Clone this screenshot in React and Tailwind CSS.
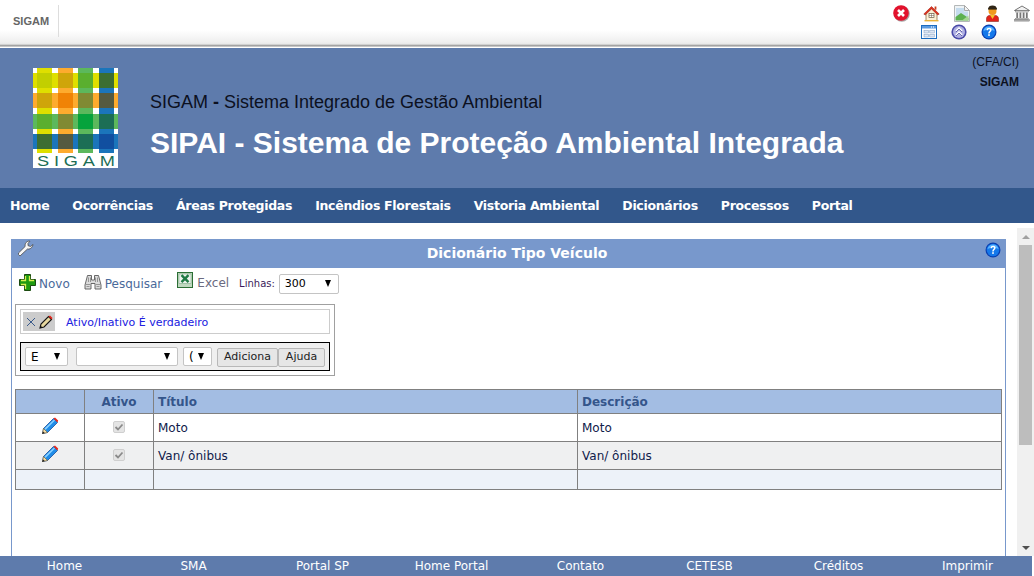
const V = '"DejaVu Sans", Verdana, sans-serif';
const A = '"Liberation Sans", Arial, sans-serif';

function HelpIcon({ s = 16 }) {
  return (
    <svg width={s} height={s} viewBox="0 0 16 16">
      <circle cx="8" cy="8" r="7.5" fill="#0a3fb0" />
      <circle cx="8" cy="8" r="6.3" fill="#1478ea" />
      <path d="M2.5 7A5.6 5.6 0 0 1 13.5 7 Q8 4 2.5 7Z" fill="#58b2ff" />
      <path d="M5.6 6.2C5.6 4.6 6.7 3.8 8.1 3.8 9.6 3.8 10.6 4.7 10.6 5.9 10.6 7.6 8.7 7.6 8.7 9.4H7.2C7.2 7.2 8.9 7 8.9 5.9 8.9 5.4 8.6 5.1 8 5.1 7.4 5.1 7.2 5.6 7.2 6.2Z" fill="#fff" />
      <rect x="7.2" y="10.2" width="1.6" height="1.7" fill="#fff" />
    </svg>
  );
}
function CloseIcon() {
  return (
    <svg width="17" height="17" viewBox="0 0 17 17">
      <circle cx="8.8" cy="8.8" r="8" fill="#a8a8a8" />
      <circle cx="8" cy="8" r="7.8" fill="#e2122d" />
      <path d="M5 5 11 11M11 5 5 11" stroke="#fff" strokeWidth="2.6" />
    </svg>
  );
}
function HomeIcon() {
  return (
    <svg width="17" height="17" viewBox="0 0 17 17">
      <path d="M3 8V15.5H14V8L8.5 3Z" fill="#fbf0d6" stroke="#7a5a30" strokeWidth=".7" />
      <path d="M.8 9 8.5 1.5 16.2 9 14.8 10 8.5 4 2.2 10Z" fill="#e2301c" stroke="#8c1a10" strokeWidth=".5" />
      <rect x="11.6" y="1.5" width="1.8" height="3.2" fill="#c9401f" />
      <rect x="6" y="8.5" width="5" height="4" fill="#fff" stroke="#6a5a40" strokeWidth=".7" />
      <path d="M8.5 8.5V12.5M6 10.5H11" stroke="#6a5a40" strokeWidth=".5" />
      <rect x="1.5" y="15" width="14" height="1.4" fill="#e8b23a" />
    </svg>
  );
}
function BrokenImage() {
  return (
    <svg width="16" height="17" viewBox="0 0 16 17">
      <path d="M.5.5H10.5L15.5 5.5V16.5H.5Z" fill="#eef3f6" stroke="#b4b8b8" />
      <path d="M10.5 .5V5.5H15.5Z" fill="#f4f4f4" stroke="#a8a8a8" />
      <path d="M2 3H10V6.5H14V12H2Z" fill="#c5dcee" />
      <path d="M1.5 15.5V12L7 8 14.5 13V15.5Z" fill="#5bb04f" />
      <path d="M8 15.5 14.5 10.5V15.5Z" fill="#a5d693" />
    </svg>
  );
}
function PersonIcon() {
  return (
    <svg width="15" height="17" viewBox="0 0 15 17">
      <path d="M1.5 16.5V13.5C1.5 11 4 10 7.5 10 11 10 13.5 11 13.5 13.5V16.5Z" fill="#e2231a" stroke="#7a1a10" strokeWidth=".5" />
      <circle cx="7.5" cy="6" r="4" fill="#f09a1e" />
      <path d="M3.2 4.4C3.2 1.5 5 .5 7.5.5 10 .5 11.8 1.5 11.8 4.4L10.5 3.6H4.5Z" fill="#2f2516" />
      <rect x="3.2" y="3" width="8.6" height="1.6" fill="#2f2516" />
      <path d="M5 10H10L7.5 14Z" fill="#f6c22a" />
    </svg>
  );
}
function BankIcon() {
  return (
    <svg width="16" height="17" viewBox="0 0 16 17">
      <path d="M8 1 15.5 5.5H.5Z" fill="#f2f2f2" stroke="#555" strokeWidth=".8" />
      <rect x="1.5" y="5.6" width="13" height="1.4" fill="#dcdcdc" stroke="#666" strokeWidth=".4" />
      <path d="M3.2 7.5V13M6.4 7.5V13M9.6 7.5V13M12.8 7.5V13" stroke="#777" strokeWidth="1.8" />
      <rect x="1.5" y="13.2" width="13" height="1.2" fill="#ccc" stroke="#555" strokeWidth=".3" />
      <rect x=".5" y="14.6" width="15" height="1.5" fill="#aaa" stroke="#444" strokeWidth=".3" />
    </svg>
  );
}
function WindowIcon() {
  return (
    <svg width="16" height="14" viewBox="0 0 16 14">
      <rect x=".5" y=".5" width="15" height="13" fill="#fff" stroke="#1d6cc0" />
      <rect x="1" y="1" width="14" height="2.5" fill="#5a9ae0" />
      <path d="M10 2H11M12 2H13" stroke="#fff" />
      <rect x="3" y="5.5" width="4.5" height="2.5" fill="#dde6f4" stroke="#7f9bc2" strokeWidth=".5" />
      <rect x="8.8" y="5.5" width="4.5" height="2.5" fill="#dde6f4" stroke="#7f9bc2" strokeWidth=".5" />
      <rect x="3" y="9.5" width="4.5" height="2.5" fill="#dde6f4" stroke="#7f9bc2" strokeWidth=".5" />
      <rect x="8.8" y="9.5" width="4.5" height="2.5" fill="#dde6f4" stroke="#7f9bc2" strokeWidth=".5" />
    </svg>
  );
}
function UpIcon() {
  return (
    <svg width="16" height="16" viewBox="0 0 16 16">
      <circle cx="8" cy="8" r="7.6" fill="#4a4aa8" />
      <circle cx="8" cy="8" r="6" fill="#b0b0e2" />
      <path d="M5 7.2 8 4.2 11 7.2M5 11.2 8 8.2 11 11.2" fill="none" stroke="#fff" strokeWidth="1.8" />
      <path d="M5 8 8 5 11 8M5 12 8 9 11 12" fill="none" stroke="#33338c" strokeWidth=".7" />
    </svg>
  );
}
function Wrench() {
  return (
    <svg width="17" height="17" viewBox="0 0 17 17">
      <path d="M1.5 14.5 3 16 10.5 9C12.5 9.5 15.5 8 16 4.5L13.5 6.5 11 5.6 11 3.4 13 1.2C10 .6 7.5 3.2 8.2 6.4L1.5 13Z" fill="#f6f6f6" stroke="#4a4a4a" strokeWidth=".8" />
    </svg>
  );
}
function Plus() {
  return (
    <svg width="17" height="17" viewBox="0 0 17 17">
      <path d="M5.5 .5H11.5V5.5H16.5V11.5H11.5V16.5H5.5V11.5H.5V5.5H5.5Z" fill="#1f9a10" stroke="#1b4a10" />
      <path d="M6.5 15V10.5H2M6.5 2V6.5H2M10.5 2V6.5H15" fill="none" stroke="#d8f050" strokeWidth="1.3" />
    </svg>
  );
}
function Binoculars() {
  return (
    <svg width="18" height="17" viewBox="0 0 18 17">
      <path d="M3.5 1.5H7.5V6H10.5V1.5H14.5L17 11V15H11V9.5H7V15H1V11Z" fill="#dcdcdc" stroke="#5a5a5a" strokeWidth=".9" />
      <path d="M2 10.5H6M12 10.5H16M4.5 3.5V8M6.5 3.5V8M11.5 3.5V8M13.5 3.5V8M2.5 12.5H5.5M12.5 12.5H15.5" stroke="#777" strokeWidth=".7" />
    </svg>
  );
}
function ExcelIcon() {
  return (
    <svg width="16" height="16" viewBox="0 0 16 16">
      <rect x=".5" y=".5" width="15" height="15" fill="#bfd8bf" stroke="#2b6e35" />
      <rect x="2" y="2" width="12" height="9.5" fill="#eef4ee" stroke="#6b9c76" strokeWidth=".5" />
      <path d="M4.5 3.2 11.5 10.2M11.5 3.2 4.5 10.2" stroke="#1f7a44" strokeWidth="2.4" />
    </svg>
  );
}
function Pencil({ s = 18 }) {
  return (
    <svg width={s} height={s} viewBox="0 0 18 18">
      <path d="M1.5 16.5 2.5 11.5 12.5 1.5 16.5 5.5 6.5 15.5Z" fill="#1f8ce8" stroke="#0b3f8f" strokeWidth=".7" />
      <path d="M3.5 11.5 13 2.5 14 3.5 4.5 13Z" fill="#8ad0ff" />
      <path d="M12.5 1.5 14 .6 17.2 3.6 16.5 5.5Z" fill="#e8291c" />
      <path d="M1.5 16.5 2.5 11.5 6.5 15.5Z" fill="#f7dfa8" stroke="#6b4a10" strokeWidth=".5" />
      <path d="M1.2 17 2 14.5 3.8 16Z" fill="#222" />
    </svg>
  );
}
function MiniPencil() {
  return (
    <svg width="14" height="14" viewBox="0 0 14 14">
      <path d="M1 13 2 9 9.5 1.5 12.5 4.5 5 12Z" fill="#e8d9a0" stroke="#111" strokeWidth="1.1" />
      <path d="M9.5 1.5 11 .5 13.5 3 12.5 4.5Z" fill="#e2231a" />
      <path d="M1 13 1.6 10.6 3.4 12.4Z" fill="#111" />
    </svg>
  );
}
function Logo() {
  const xs = [4, 25, 45, 66];
  const ys = [5, 25, 46, 66];
  const cells = [
    ['#c2cf00', '#cfa50a', '#5aaf2f', '#3c6e32'],
    ['#cfa50a', '#f08305', '#808a33', '#555a40'],
    ['#5aaf2f', '#808a33', '#06a33c', '#1c6e55'],
    ['#3c6e32', '#555a40', '#1c6e55', '#114fa0'],
  ];
  const v = ['#dfdf00', '#fdab2e', '#5cb85c', '#1b75bb'];
  return (
    <svg width="85" height="100" viewBox="0 0 85 100" className="shrink-0">
      <rect width="85" height="100" fill="#fff" />
      {v.map((c, i) => <rect key={i} x={xs[i]} y="0" width="15" height="85" fill={c} />)}
      {v.map((c, i) => <rect key={i} x="0" y={ys[i]} width="85" height="15" fill={c} />)}
      {cells.map((r, j) => r.map((c, i) => <rect key={i + '-' + j} x={xs[i]} y={ys[j]} width="15" height="15" fill={c} />))}
      <rect x="0" y="81" width="85" height="19" fill="#fff" />
      {v.map((c, i) => <rect key={i} x={xs[i]} y="81" width="15" height="4" fill={c} />)}
      <text transform="translate(4 98) scale(1.3 1)" fill="#1c6e55" fontSize="14" fontFamily={A} textLength="60" lengthAdjust="spacing">SIGAM</text>
    </svg>
  );
}
function Sel({ w, children, cls = 'h-[19px] text-[12px]', tc = '' }) {
  return (
    <div className={`flex items-center justify-between bg-white border border-[#c4c4c4] rounded-[2px] pl-[5px] pr-[7px] text-black ${cls}`} style={{ width: w }}>
      <span className={tc}>{children}</span>
      <span className="w-0 h-0 border-x-[3.5px] border-x-transparent border-t-[7px] border-t-black" />
    </div>
  );
}
const Cb = () => (
  <span className="w-[12px] h-[12px] rounded-[2px] bg-[#e4e4e4] border border-[#cfcfcf] flex items-center justify-center">
    <svg width="10" height="10" viewBox="0 0 10 10"><path d="M1.5 5 4 7.5 8.5 2.5" fill="none" stroke="#8a8a8a" strokeWidth="1.8" /></svg>
  </span>
);

function Row({ h, bg, a, b, data }) {
  return (
    <div className={`grid grid-cols-[69px_69px_424px_1fr] border-b border-[#808080] ${bg}`} style={{ height: h }}>
      <div className="border-r border-[#808080] flex justify-center pt-[3px]">{data && <Pencil />}</div>
      <div className="border-r border-[#808080] flex justify-center pt-[7px]">{data && <Cb />}</div>
      <div className="border-r border-[#808080] pl-[4px] pt-[5px] text-[12px] text-[#10204a]">{a}</div>
      <div className="pl-[4px] pt-[5px] text-[12px] text-[#10204a]">{b}</div>
    </div>
  );
}

export default function App() {
  const nav = ['Home', 'Ocorrências', 'Áreas Protegidas', 'Incêndios Florestais', 'Vistoria Ambiental', 'Dicionários', 'Processos', 'Portal'];
  const foot = ['Home', 'SMA', 'Portal SP', 'Home Portal', 'Contato', 'CETESB', 'Créditos', 'Imprimir'];
  return (
    <div className="w-[1034px] h-[576px] overflow-hidden flex flex-col bg-white" style={{ fontFamily: V }}>
      <div className="h-[48px] shrink-0 flex justify-between bg-[linear-gradient(#ffffff_0,#ffffff_30px,#efefef_42px,#e8e8e8_44px,#8c8c8c_46px,#ffffff_47px)]">
        <div className="flex h-[32px] mt-[5px] items-center pl-[13px] pr-[9px] border-r border-[#dddddd] text-[11px] font-bold text-[#666666]" style={{ fontFamily: A }}>SIGAM</div>
        <div className="w-[141px] pt-[5px] pr-[3px]">
          <div className="flex items-start h-[19px] gap-[14px]">
            <CloseIcon />
            <span className="-ml-px"><HomeIcon /></span>
            <BrokenImage />
            <span className="ml-px"><PersonIcon /></span>
            <BankIcon />
          </div>
          <div className="flex items-center gap-[14px] pl-[28px] h-[16px]">
            <WindowIcon /><UpIcon /><HelpIcon />
          </div>
        </div>
      </div>

      <div className="h-[140px] shrink-0 bg-[#5e7bac] flex pl-[33px] pt-[20px] relative" style={{ fontFamily: A }}>
        <Logo />
        <div className="ml-[32px] pt-[23px]">
          <div className="text-[18px] leading-[22px] text-[#0c1020]">SIGAM <b className="font-bold">-</b> Sistema Integrado de Gestão Ambiental</div>
          <div className="text-[30px] leading-[36px] mt-[12px] font-bold text-white">SIPAI - Sistema de Proteção Ambiental Integrada</div>
        </div>
        <div className="absolute right-[15px] top-[4px] text-right text-[12px] leading-[20px] text-[#0c1020]">
          <div>(CFA/CI)</div>
          <div className="font-bold">SIGAM</div>
        </div>
      </div>

      <div className="h-[35px] shrink-0 bg-[#32578b] flex items-center pl-[10px] pt-[1px] gap-[23px] text-[12.5px] font-bold text-white tracking-[-0.3px]">
        {nav.map(n => <span key={n}>{n}</span>)}
      </div>

      <div className="flex-1 min-h-0 flex">
        <div className="w-[1017px] pl-[11px] pr-[11px] pt-[16px] overflow-hidden">
          <div className="h-[400px] border-x border-[#7898cc]">
            <div className="h-[29px] -mx-px bg-[#7898cc] flex items-center justify-between pl-[6px] pr-[5px] relative">
              <span className="-mt-[10px]"><Wrench /></span>
              <span className="absolute left-[17px] right-0 text-center text-[14px] font-bold text-white">Dicionário Tipo Veículo</span>
              <span className="-mt-[7px]"><HelpIcon /></span>
            </div>
            <div className="flex items-center h-[31px] pl-[7px] text-[12px] text-[#4a6a9a]">
              <span className="-mt-[3px]"><Plus /></span><span className="ml-[3px]">Novo</span>
              <span className="ml-[14px] -mt-[2px]"><Binoculars /></span><span className="ml-[3px]">Pesquisar</span>
              <span className="ml-[15px] -mt-[7px]"><ExcelIcon /></span><span className="ml-[4px] -mt-[2px] text-[#6a6a80]">Excel</span>
              <span className="ml-[10px] text-[10px] text-[#3a1a5a]">Linhas:</span>
              <Sel w="60px" cls="ml-[4px] h-[20px] text-[11px]" tc="mt-[2px]">300</Sel>
            </div>
            <div className="ml-[3px] mt-[5px] w-[320px] h-[72px] border border-[#a0a0a0] p-[4px]">
              <div className="h-[25px] border border-[#cccccc] flex items-center pl-[2px]">
                <span className="w-[32px] h-[19px] bg-[#cccccc] flex items-center justify-center gap-[3px] text-[#2a4a8a] text-[13px]">
                  <svg width="10" height="10" viewBox="0 0 10 10"><path d="M1 1 9 9M9 1 1 9" stroke="#3a5a8a" strokeWidth="1" /></svg>
                  <MiniPencil />
                </span>
                <span className="ml-[11px] mt-[3px] text-[11px] text-[#2020e0]">Ativo/Inativo É verdadeiro</span>
              </div>
              <div className="mt-[8px] h-[29px] border border-black bg-[#efefef] flex items-center pl-[4px] gap-[8px]">
                <Sel w="43px">E</Sel>
                <Sel w="102px" />
                <div className="flex items-center gap-[5px] -ml-[3px]">
                  <Sel w="29px">(</Sel>
                  <div className="flex mt-[1px]">
                    <span className="w-[61px] h-[19px] bg-[#e6e6e6] border border-[#b8b8b8] rounded-[2px] flex items-center justify-center text-[11px] text-[#222]">Adiciona</span>
                    <span className="w-[47px] h-[19px] bg-[#e6e6e6] border border-[#b8b8b8] rounded-[2px] flex items-center justify-center text-[11px] text-[#222]">Ajuda</span>
                  </div>
                </div>
              </div>
            </div>
            <div className="ml-[3px] mt-[13px] w-[987px] border border-[#808080]">
              <div className="grid grid-cols-[69px_69px_424px_1fr] h-[24px] bg-[#a3bde3] border-b border-[#808080] text-[12px] font-bold text-[#34558b]">
                <div className="border-r border-[#808080]" />
                <div className="border-r border-[#808080] flex items-center justify-center">Ativo</div>
                <div className="border-r border-[#808080] flex items-center pl-[4px]">Título</div>
                <div className="flex items-center pl-[4px]">Descrição</div>
              </div>
              <Row h={28} bg="bg-white" a="Moto" b="Moto" data />
              <Row h={28} bg="bg-[#eff0f1]" a="Van/ ônibus" b="Van/ ônibus" data />
              <div className="grid grid-cols-[69px_69px_424px_1fr] h-[19px] bg-[#edf2f9]">
                <div className="border-r border-[#808080]" />
                <div className="border-r border-[#808080]" />
                <div className="border-r border-[#808080]" />
                <div />
              </div>
            </div>
          </div>
        </div>
        <div className="w-[17px] mt-[5px] bg-[#f0f0f0] flex flex-col items-center">
          <div className="h-[17px] flex items-center justify-center">
            <span className="w-0 h-0 border-x-[4px] border-x-transparent border-b-[4px] border-b-[#a0a0a0]" />
          </div>
          <div className="w-[13px] h-[200px] bg-[#bdbdbd]" />
          <div className="flex-1" />
          <div className="h-[17px] flex items-center justify-center">
            <span className="w-0 h-0 border-x-[4px] border-x-transparent border-t-[4px] border-t-[#505050]" />
          </div>
        </div>
      </div>

      <div className="h-[20px] shrink-0 bg-[#5e7bac] grid grid-cols-8 w-[1032px] text-[12px] text-white items-center">
        {foot.map(f => <div key={f} className="text-center">{f}</div>)}
      </div>
    </div>
  );
}
